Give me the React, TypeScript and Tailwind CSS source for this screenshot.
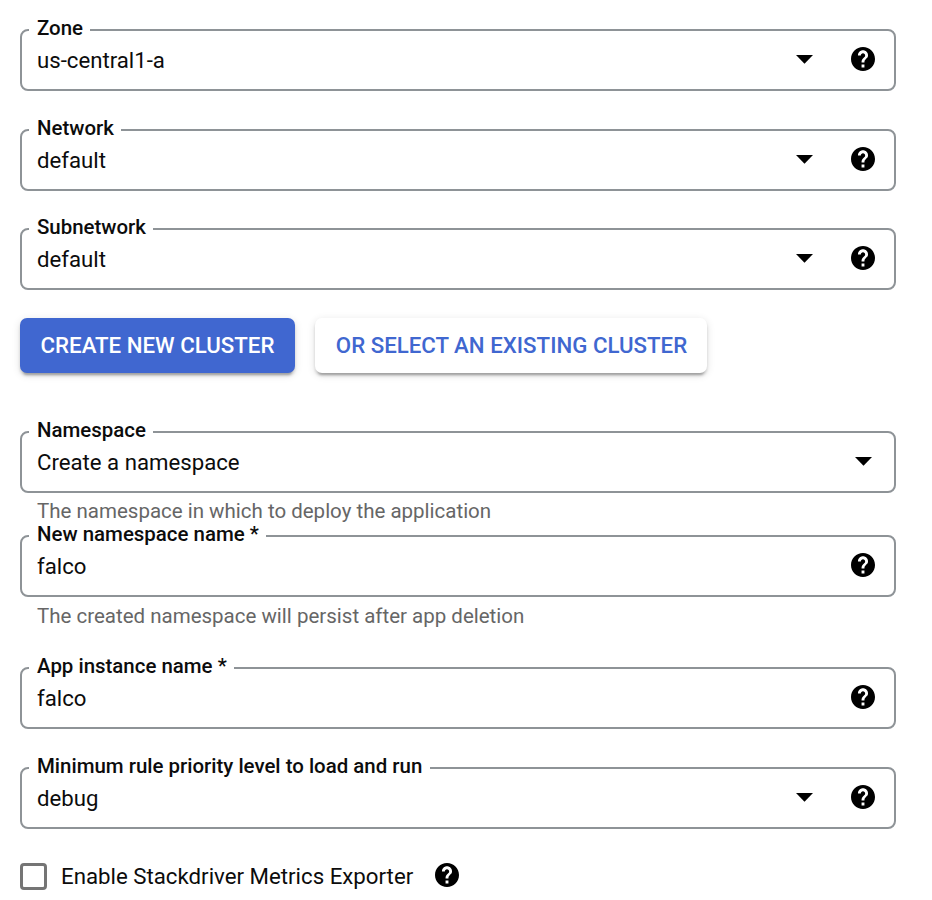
import type { ReactNode } from "react";

function HelpIcon() {
  return (
    <svg viewBox="2 2 20 20" className="mb-[2px] block h-6 w-6 shrink-0" fill="#000">
      <path d="M12 2C6.48 2 2 6.48 2 12s4.48 10 10 10 10-4.48 10-10S17.52 2 12 2zm1.2 17h-2.4v-2.4h2.4V19zm1.97-7.75l-.9.92C13.45 12.9 13.2 13.5 13.2 15h-2.4v-.5c0-1.1.45-2.1 1.17-2.83l1.24-1.26c.37-.36.59-.86.59-1.41 0-1-.8-1.8-1.8-1.8s-1.8.8-1.8 1.8H7.8c0-2.32 1.88-4.2 4.2-4.2s4.2 1.88 4.2 4.2c0 .88-.46 1.68-1.03 2.25z" />
    </svg>
  );
}

function Arrow() {
  return (
    <svg viewBox="0 0 17 9" className="mb-px block h-[9px] w-[17px] shrink-0" fill="#000">
      <path d="M0 0h17L8.5 8.7z" />
    </svg>
  );
}

type FieldProps = {
  label: string;
  labelWidth: string;
  value: string;
  className: string;
  children: ReactNode;
};

function Field({ label, labelWidth, value, className, children }: FieldProps) {
  return (
    <fieldset
      className={`h-[73px] w-[876px] rounded-[8px] border-2 border-[#8e9397] pl-[7px] pr-[19px] ${className}`}
    >
      <legend
        className={`h-6 whitespace-nowrap pl-2 text-[20.45px] font-medium leading-[20px] text-[#0c0c0c] ${labelWidth}`}
      >
        {label}
      </legend>
      <div className="flex h-[36px] items-center justify-between pl-2">
        <span className="text-[22.2px] leading-[36px] text-[#0c0c0c]">{value}</span>
        <div className="flex items-center gap-[38px]">{children}</div>
      </div>
    </fieldset>
  );
}

export default function App() {
  return (
    <main className="flex h-[900px] w-[932px] flex-col overflow-hidden bg-white pl-5 pt-[18px] font-['Roboto',sans-serif]">
      <Field label="Zone" labelWidth="w-[61px]" value="us-central1-a" className="">
        <Arrow />
        <HelpIcon />
      </Field>
      <Field label="Network" labelWidth="w-[92px]" value="default" className="mt-[27px]">
        <Arrow />
        <HelpIcon />
      </Field>
      <Field label="Subnetwork" labelWidth="w-[124px]" value="default" className="mt-[26px]">
        <Arrow />
        <HelpIcon />
      </Field>

      <div className="mt-[27px] flex h-[55px] gap-5 pt-px">
        <button className="h-[55px] w-[275px] rounded-[7px] bg-[#4067d0] text-[22.25px] font-medium text-white shadow-[0_5px_2px_-3px_rgba(0,0,0,0.2),0_3px_3px_rgba(0,0,0,0.14),0_2px_8px_rgba(0,0,0,0.12)]">
          CREATE NEW CLUSTER
        </button>
        <button className="h-[55px] w-[392px] rounded-[7px] bg-white pl-px text-[22.25px] font-medium text-[#4067d0] shadow-[0_5px_2px_-3px_rgba(0,0,0,0.2),0_3px_3px_rgba(0,0,0,0.14),0_2px_8px_rgba(0,0,0,0.12)]">
          OR SELECT AN EXISTING CLUSTER
        </button>
      </div>

      <Field label="Namespace" labelWidth="w-[124px]" value="Create a namespace" className="mt-[48px]">
        <span className="mb-px mr-[3px]">
          <Arrow />
        </span>
      </Field>
      <p className="mb-px mt-[6px] h-6 pl-[17px] text-[20.5px] leading-6 text-[#666]">
        The namespace in which to deploy the application
      </p>
      <Field label="New namespace name *" labelWidth="w-[237px]" value="falco" className="">
        <HelpIcon />
      </Field>
      <p className="mt-[7px] h-6 pl-[17px] text-[20.5px] leading-6 text-[#666]">
        The created namespace will persist after app deletion
      </p>
      <Field label="App instance name *" labelWidth="w-[205px]" value="falco" className="mt-[28px]">
        <HelpIcon />
      </Field>
      <Field
        label="Minimum rule priority level to load and run"
        labelWidth="w-[401px]"
        value="debug"
        className="mt-[27px]"
      >
        <Arrow />
        <HelpIcon />
      </Field>

      <div className="mt-[33px] flex h-[28px] items-center">
        <span className="h-[27px] w-[27px] rounded-[4px] border-[3px] border-[#757575]" />
        <span className="ml-[14px] w-[374px] whitespace-nowrap text-[22.25px] leading-7 text-[#0c0c0c]">
          Enable Stackdriver Metrics Exporter
        </span>
        <HelpIcon />
      </div>
    </main>
  );
}
